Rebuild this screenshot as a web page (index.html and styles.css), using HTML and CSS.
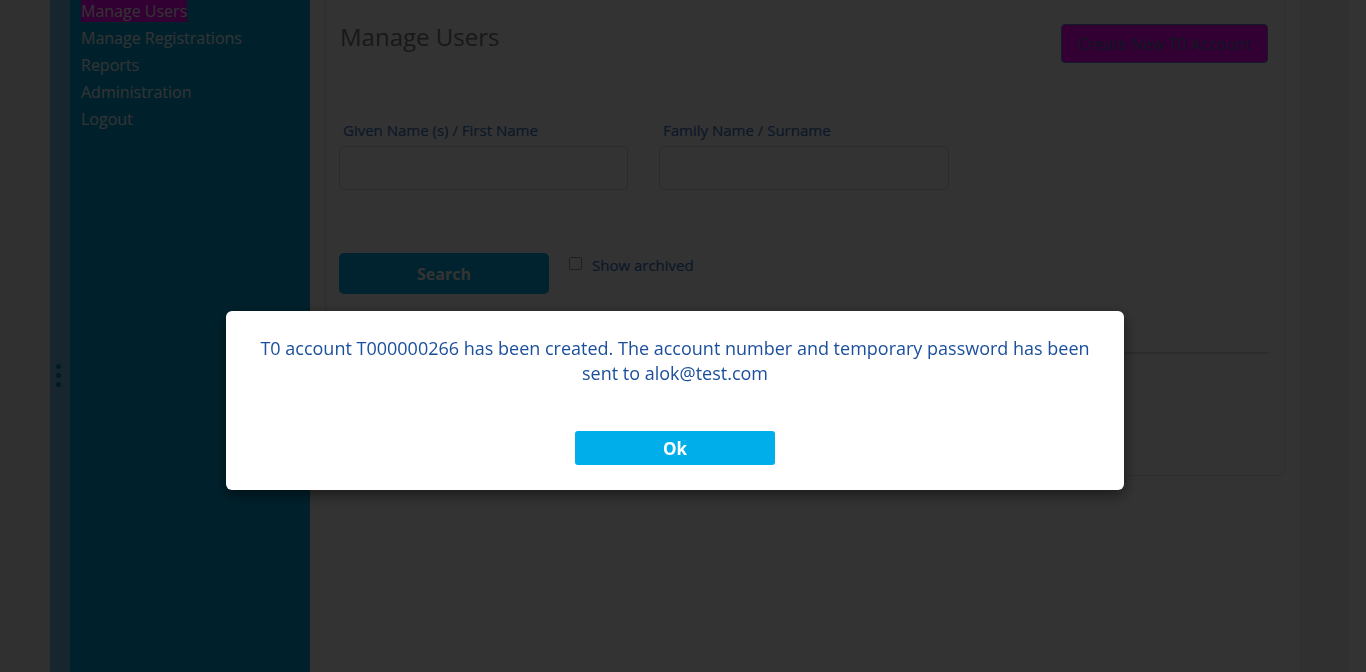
FILE: index.html
```html
<!DOCTYPE html>
<html lang="en">
<head>
<meta charset="utf-8">
<title>Manage Users</title>
<link rel="stylesheet" href="styles.css">
</head>
<body>
<div class="layout">
  <div class="gutter"></div>
  <div class="strip">
    <span class="dot"></span><span class="dot"></span><span class="dot"></span>
  </div>
  <nav class="sidebar">
    <ul class="menu">
      <li><a class="active">Manage Users</a></li>
      <li><a>Manage Registrations</a></li>
      <li><a>Reports</a></li>
      <li><a>Administration</a></li>
      <li><a>Logout</a></li>
    </ul>
  </nav>
  <main class="main">
    <section class="panel">
      <div class="panel-head">
        <h1 class="title">Manage Users</h1>
        <button class="btn-create">Create New T0 Account</button>
      </div>
      <div class="fields">
        <div class="field">
          <label class="label">Given Name (s) / First Name</label>
          <div class="input"></div>
        </div>
        <div class="field">
          <label class="label">Family Name / Surname</label>
          <div class="input"></div>
        </div>
      </div>
      <div class="search-row">
        <button class="btn-search">Search</button>
        <label class="check"><span class="box"></span>Show archived</label>
      </div>
      <hr class="rule">
    </section>
  </main>
  <div class="gutter gutter-right"></div>
  <div class="tail"></div>
</div>
<div class="backdrop"></div>
<div class="modal">
  <p class="modal-text">T0 account T000000266 has been created. The account number and temporary password has been sent to alok@test.com</p>
  <button class="btn-ok">Ok</button>
</div>
</body>
</html>
```
FILE: styles.css
```css
* { box-sizing: border-box; }
html, body { margin: 0; padding: 0; }
body {
  font-family: "Open Sans", "Noto Sans", sans-serif;
  background: #ffffff;
  height: 672px;
  overflow: hidden;
}
.layout {
  display: flex;
  height: 672px;
}
.gutter { width: 50px; background: #f0f0f0; flex: none; }
.gutter-right { width: 49px; }
.tail { flex: 1; background: #ffffff; }
.strip {
  width: 20px;
  flex: none;
  background: #73bee6;
  display: flex;
  flex-direction: column;
  align-items: flex-start;
  padding: 364px 0 0 6px;
  gap: 4px;
}
.dot {
  width: 5px;
  height: 5px;
  border-radius: 50%;
  background: #0a7fb0;
}
.sidebar {
  width: 240px;
  flex: none;
  background: #00a5dc;
  padding-left: 11px;
}
.menu {
  list-style: none;
  margin: -2px 0 0;
  padding: 0;
}
.menu li {
  font-size: 16px;
  line-height: 27px;
  color: #ffffff;
}
.menu a.active { background: #ff00ff; }
.main {
  width: 990px;
  flex: none;
  background: #ffffff;
  padding: 0 15px;
}
.panel {
  border: 1px solid #e2e6ee;
  border-top: none;
  border-radius: 0 0 6px 6px;
  height: 476px;
  padding: 0 16px 0 13px;
}
.panel-head {
  display: flex;
  justify-content: space-between;
  align-items: flex-start;
}
.title {
  margin: 20px 0 0 1px;
  font-size: 24px;
  font-weight: 400;
  line-height: 34px;
  color: #7a7a7a;
}
.btn-create {
  margin-top: 24px;
  height: 39px;
  width: 207px;
  background: #ff00ff;
  border: 1px solid #5a86c0;
  border-radius: 4px;
  color: #3f70b0;
  font-family: inherit;
  font-size: 16px;
  padding: 0;
}
.fields {
  display: flex;
  gap: 31px;
  margin-top: 57px;
}
.field { width: 289px; }
.field + .field { width: 290px; }
.label {
  display: block;
  padding-left: 4px;
  font-size: 15px;
  font-weight: 400;
  line-height: 20px;
  color: #3b78c8;
  margin-bottom: 6px;
  -webkit-text-stroke: 0.2px #3b78c8;
}
.input {
  height: 44px;
  border: 1px solid #d4d4d4;
  border-radius: 5px;
  background: #ffffff;
}
.search-row {
  display: flex;
  align-items: flex-start;
  gap: 20px;
  margin-top: 63px;
}
.btn-search {
  width: 210px;
  height: 41px;
  background: #00aee8;
  border: none;
  border-radius: 5px;
  color: #ffffff;
  font-family: inherit;
  font-size: 16px;
  font-weight: 700;
  padding: 0;
}
.check {
  display: flex;
  align-items: center;
  gap: 10px;
  font-size: 15px;
  font-weight: 400;
  color: #3b78c8;
  -webkit-text-stroke: 0.2px #3b78c8;
  margin-top: 2px;
  line-height: 20px;
}
.box {
  width: 13px;
  height: 13px;
  border: 1px solid #9a9a9a;
  border-radius: 2px;
  background: #ffffff;
  margin-top: -3px;
}
.rule {
  margin: 58px 0 0 1px;
  border: none;
  border-top: 2px solid #dcdcdc;
}
.backdrop {
  position: fixed;
  inset: 0;
  background: rgba(0, 0, 0, 0.8);
}
.modal {
  position: fixed;
  left: 226px;
  top: 311px;
  width: 898px;
  height: 179px;
  background: #ffffff;
  border-radius: 6px;
  box-shadow: 0 5px 15px rgba(0, 0, 0, 0.5);
  padding: 25px 30px 25px;
  text-align: center;
}
.modal-text {
  margin: 0;
  font-size: 18px;
  line-height: 25px;
  color: #1b4f9c;
}
.btn-ok {
  margin-top: 45px;
  width: 200px;
  height: 34px;
  background: #00aeea;
  border: none;
  border-radius: 3px;
  color: #ffffff;
  font-family: inherit;
  font-size: 17px;
  font-weight: 700;
  padding: 0;
}
```
